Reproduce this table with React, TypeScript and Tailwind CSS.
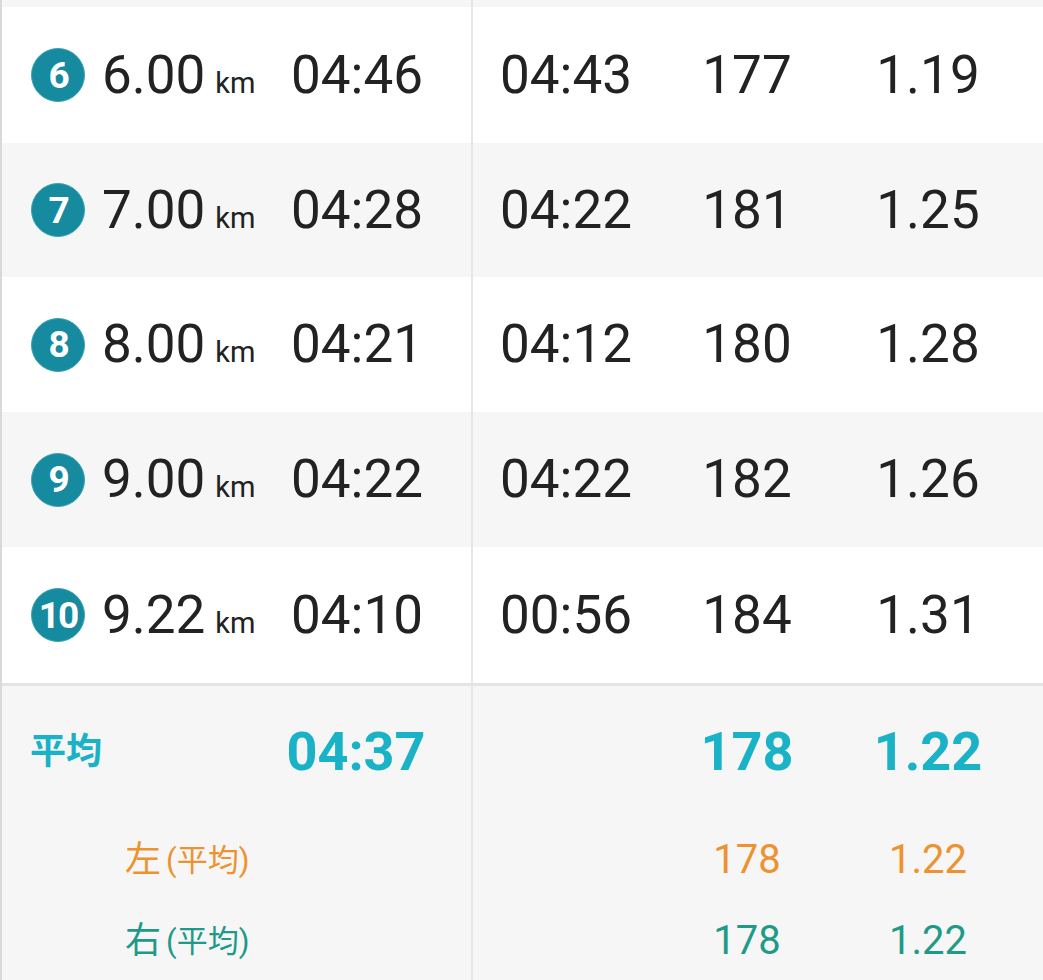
import React from "react";

const rows = [
  { n: "6", d: "6.00", p: "04:46", a: "04:43", b: "177", c: "1.19", bg: "bg-white", h: "h-[136px]" },
  { n: "7", d: "7.00", p: "04:28", a: "04:22", b: "181", c: "1.25", bg: "bg-[#f6f6f6]", h: "h-[134px]" },
  { n: "8", d: "8.00", p: "04:21", a: "04:12", b: "180", c: "1.28", bg: "bg-white", h: "h-[135px]" },
  { n: "9", d: "9.00", p: "04:22", a: "04:22", b: "182", c: "1.26", bg: "bg-[#f6f6f6]", h: "h-[135px]" },
  { n: "10", d: "9.22", p: "04:10", a: "00:56", b: "184", c: "1.31", bg: "bg-white", h: "h-[136px]" },
];

const roboto = { fontFamily: "Roboto, 'Noto Sans CJK JP', sans-serif" };
const cjk = { fontFamily: "Roboto, 'Noto Sans CJK JP', 'Noto Sans CJK SC', sans-serif" };

function Row({ r }: { r: (typeof rows)[number] }) {
  return (
    <div className={`flex ${r.h} ${r.bg} text-[#222222]`}>
      <div className="flex w-[471px] items-center border-r-2 border-[#e6e6e6]">
        <div className="ml-[29px] flex h-[54px] w-[54px] items-center justify-center rounded-full border-[1.5px] border-[#3aa3b5] bg-[#168a9f] text-[37px] leading-none font-bold text-white tracking-[-2px]">
          {r.n}
        </div>
        <div className="ml-[17px] flex w-[180px] items-baseline">
          <span className="text-[53px] leading-none">{r.d}</span>
          <span className="ml-[10px] text-[29px] leading-none">km</span>
        </div>
        <div className="w-[150px] text-center text-[53px] leading-none">{r.p}</div>
      </div>
      <div className="flex flex-1 items-center">
        <div className="w-[186px] text-center text-[53px] leading-none">{r.a}</div>
        <div className="w-[176px] text-center text-[53px] leading-none">{r.b}</div>
        <div className="w-[186px] text-center text-[53px] leading-none">{r.c}</div>
      </div>
    </div>
  );
}

export default function App() {
  return (
    <div className="h-[980px] w-[1043px] overflow-hidden border-l-2 border-[#d9d9d9] bg-[#f6f6f6]" style={roboto}>
      <div className="flex h-[7px]">
        <div className="w-[471px] border-r-2 border-[#e6e6e6]" />
      </div>
      {rows.map((r) => (
        <Row key={r.n} r={r} />
      ))}
      <div className="h-[3px] bg-[#e4e4e4]" />
      <div className="flex h-[294px]">
        <div className="flex w-[471px] flex-col border-r-2 border-[#e6e6e6]">
          <div className="flex h-[132px] items-center">
            <div className="w-[279px] pl-[28px] text-[36px] leading-none font-bold text-[#19b2c6]" style={cjk}>
              平均
            </div>
            <div className="w-[150px] text-center text-[54px] leading-none font-bold text-[#19b2c6]">04:37</div>
          </div>
          <div className="flex h-[84px] items-center pl-[123px] text-[#ec9330]" style={cjk}>
            <span className="text-[36px] leading-none">左</span>
            <span className="ml-[5px] text-[31px] leading-none">(平均)</span>
          </div>
          <div className="flex h-[78px] items-center pl-[123px] text-[#1f9a89]" style={cjk}>
            <span className="text-[36px] leading-none">右</span>
            <span className="ml-[5px] text-[31px] leading-none">(平均)</span>
          </div>
        </div>
        <div className="flex flex-1 flex-col">
          <div className="flex h-[132px] items-center font-bold text-[#19b2c6]">
            <div className="w-[186px]" />
            <div className="w-[176px] text-center text-[54px] leading-none">178</div>
            <div className="w-[186px] text-center text-[54px] leading-none">1.22</div>
          </div>
          <div className="flex h-[84px] items-center text-[#ec9330]">
            <div className="w-[186px]" />
            <div className="w-[176px] text-center text-[40px] leading-none">178</div>
            <div className="w-[186px] text-center text-[40px] leading-none">1.22</div>
          </div>
          <div className="flex h-[78px] items-center text-[#1f9a89]">
            <div className="w-[186px]" />
            <div className="w-[176px] text-center text-[40px] leading-none">178</div>
            <div className="w-[186px] text-center text-[40px] leading-none">1.22</div>
          </div>
        </div>
      </div>
    </div>
  );
}
